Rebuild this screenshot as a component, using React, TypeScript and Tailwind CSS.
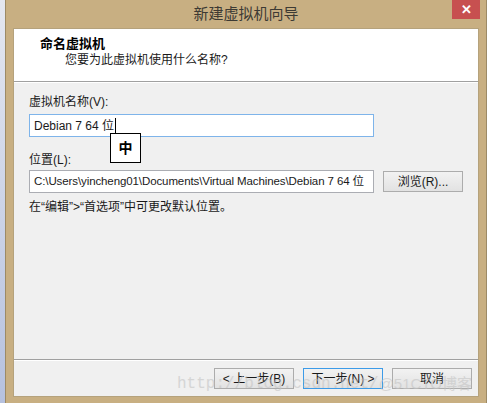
import React from "react";

const uiFont = {
  fontFamily: '"Liberation Sans", "Noto Sans CJK SC", "Noto Sans", sans-serif',
};

function WinButton({
  children,
  primary = false,
}: {
  children: React.ReactNode;
  primary?: boolean;
}) {
  return (
    <div
      className={`flex h-[21px] w-[80px] items-center justify-center border bg-gradient-to-b from-[#f2f2f2] to-[#e2e2e2] text-[12px] text-[#1a1a1a] ${
        primary ? "border-[#3c9be8]" : "border-[#acacac]"
      }`}
    >
      {children}
    </div>
  );
}

export default function App() {
  return (
    <div
      className="flex h-[403px] w-[487px] overflow-hidden bg-[#f5f6f8]"
      style={uiFont}
    >
      {/* desktop strip on the left */}
      <div className="h-full w-[5px] bg-gradient-to-b from-[#e4e7f0] to-[#b6c1de]" />

      {/* window */}
      <div className="flex h-full w-[482px] flex-col border-x border-[#9c8a66] bg-[#c8af82]">
        {/* title bar */}
        <div className="relative flex h-[28px] shrink-0 items-center justify-center">
          <span className="text-[15px] text-[#3d3a34]">新建虚拟机向导</span>
          <div className="absolute right-[6px] top-0 flex h-[19px] w-[28px] items-center justify-center bg-[#c75050] text-[13px] font-bold text-white">
            ✕
          </div>
        </div>

        {/* client area */}
        <div className="mx-[7px] flex h-[369px] flex-col border border-[#b5a27c] bg-[#f0f0f0]">
          {/* header */}
          <div className="flex h-[53px] shrink-0 flex-col border-b border-[#a0a0a0] bg-white pl-[26px] pt-[6px]">
            <span className="text-[13px] font-bold leading-[18px] text-black">
              命名虚拟机
            </span>
            <span className="ml-[25px] mt-[-2px] text-[12px] leading-[18px] text-[#1a1a1a]">
              您要为此虚拟机使用什么名称?
            </span>
          </div>

          {/* body */}
          <div className="relative flex h-[277px] shrink-0 flex-col border-t border-white px-[15px] pt-[11px] text-[12px] text-[#1a1a1a]">
            <span className="leading-[16px]">虚拟机名称(V):</span>
            <div className="mt-[4px] flex h-[23px] w-[345px] items-center border border-[#7eb4ea] bg-white pl-[4px]">
              <span className="text-[12px] text-[#1a1a1a]">Debian 7 64 位</span>
              <span className="ml-[1px] h-[15px] w-px bg-black" />
            </div>

            <span className="mt-[15px] leading-[16px]">位置(L):</span>
            <div className="mt-[2px] flex items-center">
              <div className="flex h-[23px] w-[345px] items-center overflow-hidden whitespace-nowrap border border-[#abadb3] bg-white pl-[4px] text-[11.5px] tracking-[-0.1px]">
                C:\Users\yincheng01\Documents\Virtual Machines\Debian 7 64 位
              </div>
              <div className="ml-[9px]">
                <WinButton>浏览(R)...</WinButton>
              </div>
            </div>

            <span className="mt-[6px] leading-[16px]">
              在“编辑”&gt;“首选项”中可更改默认位置。
            </span>

            {/* IME indicator */}
            <div className="absolute left-[96px] top-[50px] flex h-[30px] w-[31px] items-center justify-center border border-black bg-white text-[14px] font-bold text-black">
              中
            </div>
          </div>

          {/* footer */}
          <div className="relative flex flex-1 items-start justify-end gap-[9px] border-t border-[#a0a0a0] pr-[6px] pt-[8px]">
            <div className="absolute inset-x-0 top-0 h-px bg-white" />
            <WinButton>&lt; 上一步(B)</WinButton>
            <WinButton primary>下一步(N) &gt;</WinButton>
            <WinButton>取消</WinButton>
            {/* watermark */}
            <div className="pointer-events-none absolute left-[163px] top-[12px] flex items-center whitespace-nowrap text-[#c4c4c4] opacity-60">
              <span
                className="text-[16px]"
                style={{ fontFamily: '"Liberation Mono", monospace' }}
              >
                http://blog.csdn.net/
              </span>
              <span className="text-[15px]">@51CTO博客</span>
            </div>
          </div>
        </div>
        <div className="flex-1" />
      </div>
    </div>
  );
}
